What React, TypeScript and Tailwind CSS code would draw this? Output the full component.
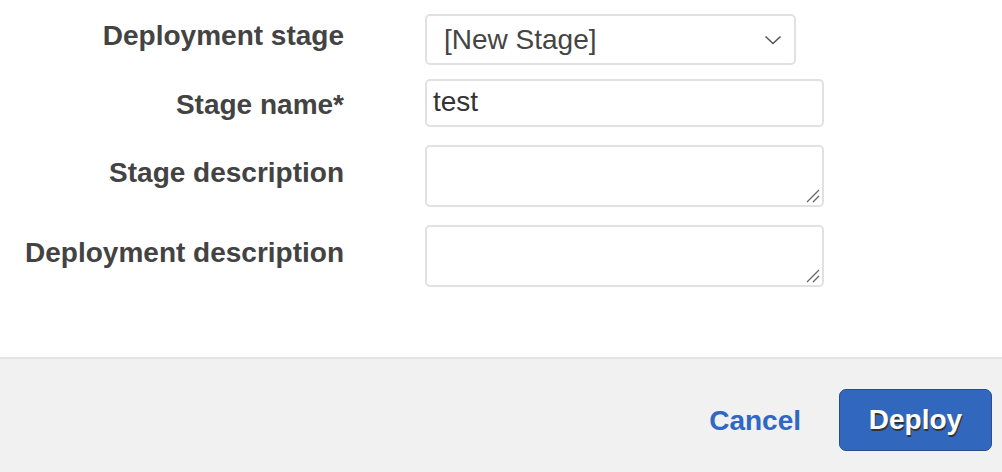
import React from "react";

const fieldClass =
  "rounded-[5px] border-2 border-[#e1e1e1] bg-white text-[28px] text-[#333] outline-none";

const labelClass = "self-center text-right text-[28px] leading-none font-bold text-[#434343]";

export default function App() {
  return (
    <div className="flex h-[472px] w-[1002px] flex-col bg-white font-['Liberation_Sans',Arial,sans-serif]">
      <div className="flex-1 pt-[14px]">
        <div className="grid grid-cols-[344px_1fr] gap-x-[81px] gap-y-[14px]">
          <label className={`${labelClass} pb-[8px]`}>Deployment stage</label>
          <div className={`${fieldClass} flex h-[51px] w-[371px] items-center justify-between pl-[17px] pr-[12px] text-[#444]`}>
            <span>[New Stage]</span>
            <svg width="18" height="10" viewBox="0 0 18 10" fill="none">
              <path d="M1.5 1.5 L9 8.5 L16.5 1.5" stroke="#555" strokeWidth="1.6" />
            </svg>
          </div>

          <label className={`${labelClass} pt-[4px]`}>Stage name*</label>
          <div className={`${fieldClass} flex h-[48px] w-[399px] items-center px-[6px] pb-[2px]`}>test</div>

          <label className={`${labelClass} pb-[2px]`}>Stage description</label>
          <Textarea />

          <label className={`${labelClass} pb-[2px]`}>Deployment description</label>
          <Textarea />
        </div>
      </div>

      <div className="flex h-[115px] items-center justify-end gap-[38px] border-t-2 border-[#e4e4e4] bg-[#f1f1f1] pr-[10px] pt-[8px]">
        <button className="pt-[2px] text-[28px] font-bold text-[#2f67c2]">Cancel</button>
        <button className="h-[62px] w-[153px] rounded-[7px] border border-[#24508f] bg-[#3167bd] text-[28px] font-bold text-white [text-shadow:1px_2px_0_#333]">
          Deploy
        </button>
      </div>
    </div>
  );
}

function Textarea() {
  return (
    <div className={`${fieldClass} relative mt-[4px] h-[62px] w-[399px]`}>
      <svg className="absolute bottom-[2px] right-[2px]" width="14" height="14" viewBox="0 0 14 14">
        <path d="M1 13 L13 1 M7 13 L13 7" stroke="#666" strokeWidth="1.3" />
      </svg>
    </div>
  );
}
